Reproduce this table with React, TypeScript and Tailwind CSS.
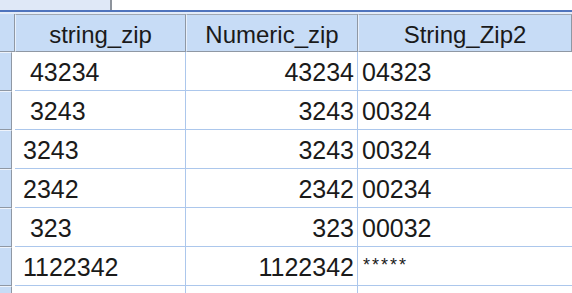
import React from "react";

const ROWS: [string, string, string][] = [
  [" 43234", "43234", "04323"],
  [" 3243", "3243", "00324"],
  ["3243", "3243", "00324"],
  ["2342", "2342", "00234"],
  [" 323", "323", "00032"],
  ["1122342", "1122342", "*****"],
  ["", "", ""],
];

const cols = "grid grid-cols-[15px_171px_172px_1fr]";

export default function App() {
  return (
    <div className="w-[572px] h-[293px] overflow-hidden bg-white font-['Liberation_Sans',Arial,sans-serif] text-[#1a1a1a]">
      {/* toolbar strip */}
      <div className="flex h-[10px]">
        <div className="w-[112px] bg-[#dfe8f7] border-r-2 border-[#8d939c]" />
        <div className="flex-1 bg-white" />
      </div>
      <div className="h-[2px] bg-[#4f74bd]" />
      <div className="h-[2px] bg-[#e4ecf8]" />

      {/* header */}
      <div className={`${cols} h-[38px]`}>
        <div className="bg-[#c7dcf6] border-r border-b border-[#8f98a4]" />
        {["string_zip", "Numeric_zip", "String_Zip2"].map((h) => (
          <div
            key={h}
            className="flex items-center justify-center pt-[3px] bg-[#c7dcf6] border-t border-l border-t-[#a0a8b3] border-l-[#e8f0fb] border-r border-b border-r-[#8f98a4] border-b-[#8f98a4] text-[24px] leading-none"
          >
            {h}
          </div>
        ))}
      </div>

      {/* data rows */}
      {ROWS.map((r, i) => (
        <div key={i} className={`${cols} h-[39px]`}>
          <div className="flex">
            <div className="w-[12px] bg-[#c7dcf6] border-t border-t-[#eef3fb] border-r border-b border-r-[#8f98a4] border-b-[#8f98a4]" />
            <div className="flex-1 bg-white" />
          </div>
          <div className="flex items-center pt-[2px] pl-[8px] border-r border-b border-[#acc7ec] text-[25px] leading-none whitespace-pre">
            {r[0]}
          </div>
          <div className="flex items-center justify-end pt-[2px] pr-[3px] border-r border-b border-[#acc7ec] text-[25px] leading-none">
            {r[1]}
          </div>
          {r[2] === "*****" ? (
            <div className="flex items-start pt-[9px] pl-[5px] border-b border-[#acc7ec] text-[18px] tracking-[2px] leading-none">
              {r[2]}
            </div>
          ) : (
            <div className="flex items-center pt-[2px] pl-[4px] border-b border-[#acc7ec] text-[25px] leading-none">
              {r[2]}
            </div>
          )}
        </div>
      ))}
    </div>
  );
}
